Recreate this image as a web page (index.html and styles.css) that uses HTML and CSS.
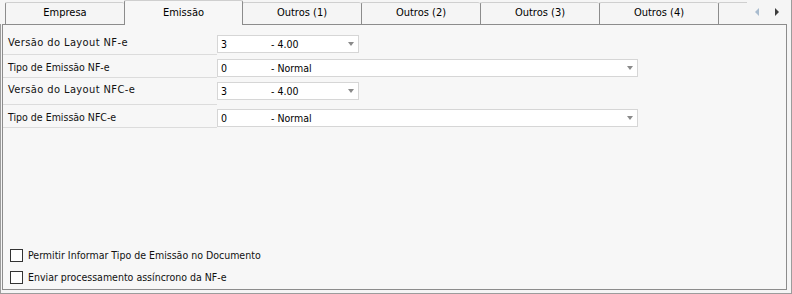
FILE: index.html
```html
<!DOCTYPE html>
<html lang="pt-BR">
<head>
    <meta charset="UTF-8">
    <title>Configurações NF-e</title>
    <link rel="stylesheet" href="styles.css">
</head>
<body>

    <div class="window">

        <div class="tabs">
            <div class="tab">Empresa</div>
            <div class="tab active">Emissão</div>
            <div class="tab">Outros (1)</div>
            <div class="tab">Outros (2)</div>
            <div class="tab">Outros (3)</div>
            <div class="tab">Outros (4)</div>
            <div class="tab clipped"></div>
            <!-- scroll arrows of the tab strip -->
            <svg class="tab-scroll" width="43" height="24" viewBox="0 0 43 24">
                <polygon points="8,12 12,8 12,16" fill="#a9bccf"/>
                <polygon points="32,12 28,8 28,16" fill="#3c3c3c"/>
            </svg>
        </div>

        <div class="frame">
            <div class="panel">

                <div class="fields">
                    <div class="field">
                        <div class="field-label wide-text">Versão do Layout NF-e</div>
                        <div class="field-input">
                            <div class="combo small">
                                <span class="code">3</span>
                                <span class="desc">- 4.00</span>
                                <span class="arrow"></span>
                            </div>
                        </div>
                    </div>
                    <div class="field">
                        <div class="field-label">Tipo de Emissão NF-e</div>
                        <div class="field-input">
                            <div class="combo wide">
                                <span class="code">0</span>
                                <span class="desc">- Normal</span>
                                <span class="arrow"></span>
                            </div>
                        </div>
                    </div>
                    <div class="field tall">
                        <div class="field-label wide-text">Versão do Layout NFC-e</div>
                        <div class="field-input">
                            <div class="combo small">
                                <span class="code">3</span>
                                <span class="desc">- 4.00</span>
                                <span class="arrow"></span>
                            </div>
                        </div>
                    </div>
                    <div class="field">
                        <div class="field-label">Tipo de Emissão NFC-e</div>
                        <div class="field-input">
                            <div class="combo wide">
                                <span class="code">0</span>
                                <span class="desc">- Normal</span>
                                <span class="arrow"></span>
                            </div>
                        </div>
                    </div>
                </div>

                <div class="options">
                    <label class="option"><span class="check"></span>Permitir Informar Tipo de Emissão no Documento</label>
                    <label class="option"><span class="check"></span>Enviar processamento assíncrono da NF-e</label>
                </div>

            </div>
        </div>

    </div>

</body>
</html>
```

FILE: styles.css
```css
* {
    margin: 0px;
    padding: 0px;
    box-sizing: border-box;
}
html, body {
    width: 100%;
    height: 100%;
}
body {
    background-color: #f5f5f5;
    font-family: "DejaVu Sans Condensed", "Liberation Sans", sans-serif;
    font-size: 10.5px;
    color: #111;
}
.window {
    width: 792px;
    height: 294px;
    border-right: 1px solid #9c9c9c;
}

/* tab strip */
.tabs {
    height: 24px;
    display: flex;
    align-items: flex-end;
    padding-left: 5px;
}
.tab {
    width: 119px;
    height: 22px;
    border-left: 1px solid #8c8c8c;
    border-top: 1px solid #cfcfcf;
    border-radius: 2px 2px 0 0;
    background-color: #f5f5f5;
    text-align: center;
    font-size: 11px;
    line-height: 20px;
    color: #000;
}
.tab.active {
    position: relative;
    z-index: 1;
    height: 25px;
    margin-bottom: -1px;
    border-right: 1px solid #8c8c8c;
    margin-right: -1px;
    background-color: #f7f7f7;
    line-height: 24px;
}
.tab.clipped {
    width: 29px;
    border-radius: 2px 0 0 0;
}
.tab-scroll {
    display: block;
    align-self: stretch;
}

/* frame around the page of the tab */
.frame {
    height: 270px;
    border-left: 1px solid #9c9c9c;
    border-bottom: 1px solid #9c9c9c;
    padding: 0px 4px 3px 1px;
}
.panel {
    height: 100%;
    border: 1px solid #8c8c8c;
    background-color: #f7f7f7;
    display: flex;
    flex-direction: column;
    padding-top: 6px;
    padding-bottom: 1px;
}

.field {
    display: grid;
    grid-template-columns: 214px 1fr;
    height: 23px;
}
.field:first-child {
    height: 24px;
}
.field.tall {
    height: 27px;
}
.field-label {
    border-bottom: 1px solid #dcdcdc;
    padding: 4px 0 0 5px;
    line-height: 16px;
}
.wide-text {
    font-size: 11px;
    letter-spacing: 0.4px;
}
.field-input {
    padding-top: 4px;
}

.combo {
    position: relative;
    height: 18px;
    border: 1px solid #d6d6d6;
    background-color: #fff;
    display: flex;
    font-size: 10.5px;
    line-height: 16px;
    color: #000;
}
.combo.small {
    width: 142px;
}
.combo.wide {
    width: 421px;
}
.code {
    width: 53px;
    padding-left: 3px;
}
.arrow {
    position: absolute;
    right: 4px;
    top: 6px;
    width: 0;
    height: 0;
    border-left: 3px solid transparent;
    border-right: 3px solid transparent;
    border-top: 4px solid #8a8a8a;
}

/* check boxes at the bottom */
.options {
    margin-top: auto;
    display: flex;
    flex-direction: column;
}
.option {
    height: 22px;
    display: flex;
    align-items: center;
    padding-left: 7px;
}
.check {
    width: 13px;
    height: 13px;
    border: 1px solid #333;
    background-color: #fff;
    margin-right: 5px;
}
```
